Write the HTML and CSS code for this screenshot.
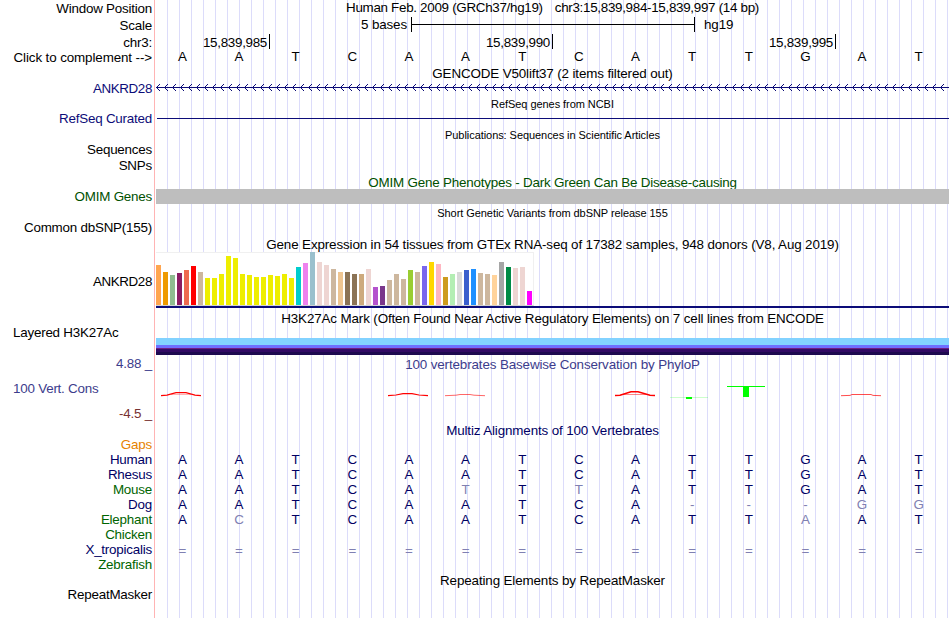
FILE: index.html
```
<!DOCTYPE html>
<html lang="en">
<head>
    <meta charset="UTF-8">
    <title>chr3:15,839,984-15,839,997 - Genome Browser</title>
    <link rel="stylesheet" href="styles.css">
</head>
<body>
    <div class="browser">
        <!-- position and ruler -->
        <div class="row h16">
            <div class="label first">Window Position</div>
            <div class="track title position"><span>Human Feb. 2009 (GRCh37/hg19)</span><span>chr3:15,839,984-15,839,997 (14 bp)</span></div>
        </div>
        <div class="row h17 ruler-row">
            <div class="label">Scale</div>
            <div class="track scale">
                <span class="scale-size">5 bases</span>
                <span class="scale-bar"></span>
                <span class="scale-db">hg19</span>
            </div>
        </div>
        <div class="row h17 ruler-row">
            <div class="label">chr3:</div>
            <div class="track ruler">
                <span class="tick first">15,839,985</span>
                <span class="tick">15,839,990</span>
                <span class="tick">15,839,995</span>
            </div>
        </div>
        <div class="row h15 complement">
            <div class="label">Click to complement --&gt;</div>
            <div class="track bases" data-seq="AATCAATCATTGAT"></div>
        </div>

        <!-- genes -->
        <div class="title low h16">GENCODE V50lift37 (2 items filtered out)</div>
        <div class="row h15">
            <div class="label blue gene">ANKRD28</div>
            <div class="track">
                <svg width="793" height="15" shape-rendering="crispEdges">
                    <defs>
                        <pattern id="strand" width="8" height="15" patternUnits="userSpaceOnUse">
                            <path d="M3 3h1v1h-1zM2 4h1v1h-1zM1 5h1v1h-1zM0 6h1v1h-1zM1 7h1v1h-1zM2 8h1v1h-1zM3 9h1v1h-1z" fill="#0c0c78"/>
                        </pattern>
                    </defs>
                    <rect width="793" height="15" fill="url(#strand)"/>
                    <rect y="6" width="793" height="1" fill="#0c0c78"/>
                </svg>
            </div>
        </div>
        <div class="title small h15">RefSeq genes from NCBI</div>
        <div class="row h16">
            <div class="label blue">RefSeq Curated</div>
            <div class="track"><div class="gene-line"></div></div>
        </div>

        <!-- literature and phenotypes -->
        <div class="title small h15">Publications: Sequences in Scientific Articles</div>
        <div class="row h16"><div class="label">Sequences</div></div>
        <div class="row h16"><div class="label">SNPs</div></div>
        <div class="title green low h15 omim-title">OMIM Gene Phenotypes - Dark Green Can Be Disease-causing</div>
        <div class="row h15">
            <div class="label green">OMIM Genes</div>
            <div class="track omim-bar"></div>
        </div>
        <div class="title small low h16">Short Genetic Variants from dbSNP release 155</div>
        <div class="row h16"><div class="label">Common dbSNP(155)</div></div>

        <!-- expression -->
        <div class="title h16 gtex-title">Gene Expression in 54 tissues from GTEx RNA-seq of 17382 samples, 948 donors (V8, Aug 2019)</div>
        <div class="row gtex-row">
            <div class="label gene">ANKRD28</div>
            <div class="track gtex"><div class="gtex-bars" id="gtex"></div></div>
        </div>

        <!-- regulation -->
        <div class="title low h17 h3k-title">H3K27Ac Mark (Often Found Near Active Regulatory Elements) on 7 cell lines from ENCODE</div>
        <div class="row h3k-row">
            <div class="label left">Layered H3K27Ac</div>
            <div class="track h3k"></div>
        </div>

        <!-- conservation -->
        <div class="row phylop-row">
            <div class="phylop-labels">
                <div class="label navy">4.88 _</div>
                <div class="label navy left">100 Vert. Cons</div>
                <div class="label maroon">-4.5 _</div>
            </div>
            <div class="track">
                <div class="title navy h15">100 vertebrates Basewise Conservation by PhyloP</div>
                <svg class="phylop" width="793" height="50" viewBox="156 372 793 50">
                    <g fill="none" stroke="#f00">
                        <path d="M161 395.6L167 395.2L176 392.7H186L195 395.2L201 395.6" stroke-width="1.3"/>
                        <path d="M171 394.5H191" stroke-width=".6" opacity=".5"/>
                        <path d="M388 395.6L396 395L403 393.6H412L419 395L428 395.6" stroke-width="1.1"/>
                        <path d="M445 395.7L456 395.2L460 394.5H470L474 395.2L485 395.7" stroke-width=".6"/>
                        <path d="M615 395.6L620 395.2L631 391.8H638L650 395.2L655 395.6" stroke-width="1.5"/>
                        <path d="M622 394.5H648" stroke-width=".8" opacity=".6"/>
                        <path d="M841 395.7L850 395.4L852 394.5H871L873 395.4L881 395.7" stroke-width=".7"/>
                    </g>
                    <g fill="#0f0" shape-rendering="crispEdges">
                        <rect x="670" y="397" width="38" height="1" opacity=".2"/>
                        <rect x="686" y="397" width="6" height="2"/>
                        <rect x="727" y="386" width="38" height="1"/>
                        <rect x="743" y="387" width="6" height="10"/>
                    </g>
                </svg>
            </div>
        </div>

        <!-- alignments -->
        <div class="title dark low h15">Multiz Alignments of 100 Vertebrates</div>
        <div class="row h15"><div class="label orange">Gaps</div></div>
        <div class="row h15"><div class="label dark">Human</div><div class="track bases dark" data-seq="AATCAATCATTGAT"></div></div>
        <div class="row h15"><div class="label dark">Rhesus</div><div class="track bases dark" data-seq="AATCAATCATTGAT"></div></div>
        <div class="row h15"><div class="label green2">Mouse</div><div class="track bases dark" data-seq="AATCAtTtATTGAT"></div></div>
        <div class="row h15"><div class="label dark">Dog</div><div class="track bases dark" data-seq="AATCAATCA---gg"></div></div>
        <div class="row h15"><div class="label green2">Elephant</div><div class="track bases dark" data-seq="AcTCAATCATTaAT"></div></div>
        <div class="row h15"><div class="label green2">Chicken</div></div>
        <div class="row h15"><div class="label dark">X_tropicalis</div><div class="track bases dark unaligned" data-seq="=============="></div></div>
        <div class="row h15"><div class="label green2">Zebrafish</div></div>

        <!-- repeats -->
        <div class="title low h15">Repeating Elements by RepeatMasker</div>
        <div class="row h15"><div class="label">RepeatMasker</div></div>
    </div>
    <script src="tracks.js"></script>
</body>
</html>
```
FILE: styles.css
```
* {
    margin: 0;
    padding: 0;
    box-sizing: border-box;
}

body {
    width: 950px;
    height: 618px;
    overflow: hidden;
    background: #fff;
    color: #000;
    font-family: "Liberation Sans", Arial, Helvetica, sans-serif;
    font-size: 13.4px;
    letter-spacing: -0.13px;
    line-height: 16px;
}

/* guide lines every 12px behind all tracks */
.browser {
    width: 950px;
    height: 618px;
    background:
        linear-gradient(#ffb4b4, #ffb4b4) 154px 0 / 1px 100% no-repeat,
        repeating-linear-gradient(90deg, #dcdcfa 0, #dcdcfa 1px, transparent 1px, transparent 12px) 167px 0 / 782px 100% no-repeat;
}

.row {
    display: flex;
}

.label {
    width: 152px;
    margin-right: 4px;
    flex: none;
    text-align: right;
    white-space: pre;
    line-height: 15px;
    letter-spacing: -0.22px;
}

.label.first {
    line-height: 17px;
}

.label.gene {
    letter-spacing: -0.38px;
}

.label.left {
    text-align: left;
    padding-left: 13px;
}

.track {
    width: 793px;
    flex: none;
}

.title {
    margin-left: 156px;
    width: 793px;
    text-align: center;
    white-space: pre;
}

.track.title,
.track .title {
    margin-left: 0;
}

.small {
    font-size: 11px;
    letter-spacing: -0.06px;
}

.low {
    line-height: 18px;
}

.h15 { height: 15px; }
.h16 { height: 16px; }
.h17 { height: 17px; }

.blue { color: #0c0c78; }
.navy { color: #3c3c8c; }
.dark { color: #000064; }
.green { color: #005000; }
.green2 { color: #006400; }
.orange { color: #e68200; }
.maroon { color: #783232; }

.position {
    letter-spacing: -0.3px;
}

.position span + span {
    margin-left: 12px;
}

/* scale */
.ruler-row {
    line-height: 18px;
}

.ruler-row .label {
    line-height: 19px;
}

.scale {
    display: flex;
}

.scale-size {
    width: 251px;
    margin-right: 4px;
    text-align: right;
}

.scale-bar {
    width: 284px;
    height: 15px;
    margin-top: 1px;
    border-left: 1px solid #000;
    border-right: 1px solid #000;
    background: linear-gradient(#000, #000) 0 7px / 100% 1px no-repeat;
}

.scale-db {
    margin-left: 9px;
}

.ruler {
    display: flex;
    letter-spacing: -0.3px;
}

.tick {
    width: 283px;
    height: 15px;
    margin-top: 1px;
    padding-right: 2px;
    border-right: 1px solid #000;
    text-align: right;
}

.tick.first {
    width: 114px;
}

.bases {
    display: flex;
    margin-left: -2px;
}

.bases span {
    flex: 1;
    text-align: center;
}

.bases .diff {
    color: #8080b2;
}

.unaligned {
    line-height: 18px;
}

.complement .label {
    letter-spacing: -0.11px;
}

.complement .track {
    line-height: 14px;
}

/* items */
.gene-line {
    height: 1px;
    margin: 7px 0 0 1px;
    background: #0c0c78;
}

.omim-title {
    letter-spacing: -0.2px;
}

.omim-bar {
    background: #bebebe;
}

.gtex-title {
    line-height: 17px;
}

.gtex-row {
    height: 56px;
}

.gtex-row .label {
    line-height: 60px;
}

.gtex {
    border-bottom: 2px solid #0c0c78;
}

.gtex-bars {
    display: flex;
    align-items: flex-end;
    gap: 2px;
    width: 378px;
    height: 54px;
    background: #fff;
    border: solid #f0f0f0;
    border-width: 1px 1px 0 0;
    border-bottom: 1px solid #d2d2d2;
}

.gtex-bar {
    width: 5px;
    flex: none;
}

.h3k-title {
    margin-top: 2px;
}

.h3k-row {
    height: 30px;
}

.h3k-row .label {
    line-height: 11px;
}

.h3k {
    height: 17px;
    margin-top: 11px;
    background: linear-gradient(#82d2ff 7px, #6e6eff 7px 10px, #6e1e82 10px 11px, #320a64 11px 14px, #1e0a50 14px);
}

.phylop-row {
    height: 65px;
}

.phylop-labels {
    display: flex;
    flex-direction: column;
    justify-content: space-between;
    margin-top: -1px;
    padding-bottom: 1px;
}

.phylop {
    display: block;
}
```
FILE: tracks.js
```
// lower case bases differ from the reference and are drawn lighter
document.querySelectorAll('.bases').forEach(track => {
    for (const base of track.dataset.seq) {
        const cell = document.createElement('span');
        cell.textContent = base.toUpperCase();
        if (!/[A-Z]/.test(base)) cell.className = 'diff';
        track.appendChild(cell);
    }
});

// [height, color] for each GTEx tissue
const yellow = '#eeee00';
const tissues = [
    [40, '#ffa54f'], [33, '#ee9a00'], [30, '#8fbc8f'], [32, '#8b1c62'], [35, '#ee6a50'], [39, '#ff0000'],
    [33, '#cdb79e'], [27, yellow], [27, yellow], [31, yellow], [49, yellow], [47, yellow],
    [31, yellow], [30, yellow], [28, yellow], [28, yellow], [30, yellow], [29, yellow],
    [31, yellow], [27, yellow], [38, '#00cdcd'], [42, '#ee82ee'], [53, '#9ac0cd'], [43, '#eed5d2'],
    [40, '#eed5d2'], [36, '#cdb79e'], [33, '#eec591'], [33, '#8b7355'], [31, '#8b7355'], [31, '#cdaa7d'],
    [36, '#eed5d2'], [18, '#b452cd'], [19, '#7a378b'], [25, '#cdb79e'], [31, '#cdb79e'], [26, '#cdb79e'],
    [35, '#9acd32'], [33, '#cdb79e'], [39, '#7a67ee'], [43, '#ffd700'], [41, '#ffb6c1'], [28, '#cd9b1d'],
    [31, '#b4eeb4'], [33, '#d9d9d9'], [35, '#3a5fcd'], [36, '#1e90ff'], [32, '#cdb79e'], [31, '#cdb79e'],
    [30, '#ffd39b'], [43, '#a6a6a6'], [38, '#008b45'], [37, '#eed5d2'], [38, '#eed5d2'], [14, '#ff00ff']
];

const gtex = document.getElementById('gtex');
tissues.forEach(([height, color]) => {
    const bar = document.createElement('div');
    bar.className = 'gtex-bar';
    bar.style.height = height + 'px';
    bar.style.background = color;
    gtex.appendChild(bar);
});
```
